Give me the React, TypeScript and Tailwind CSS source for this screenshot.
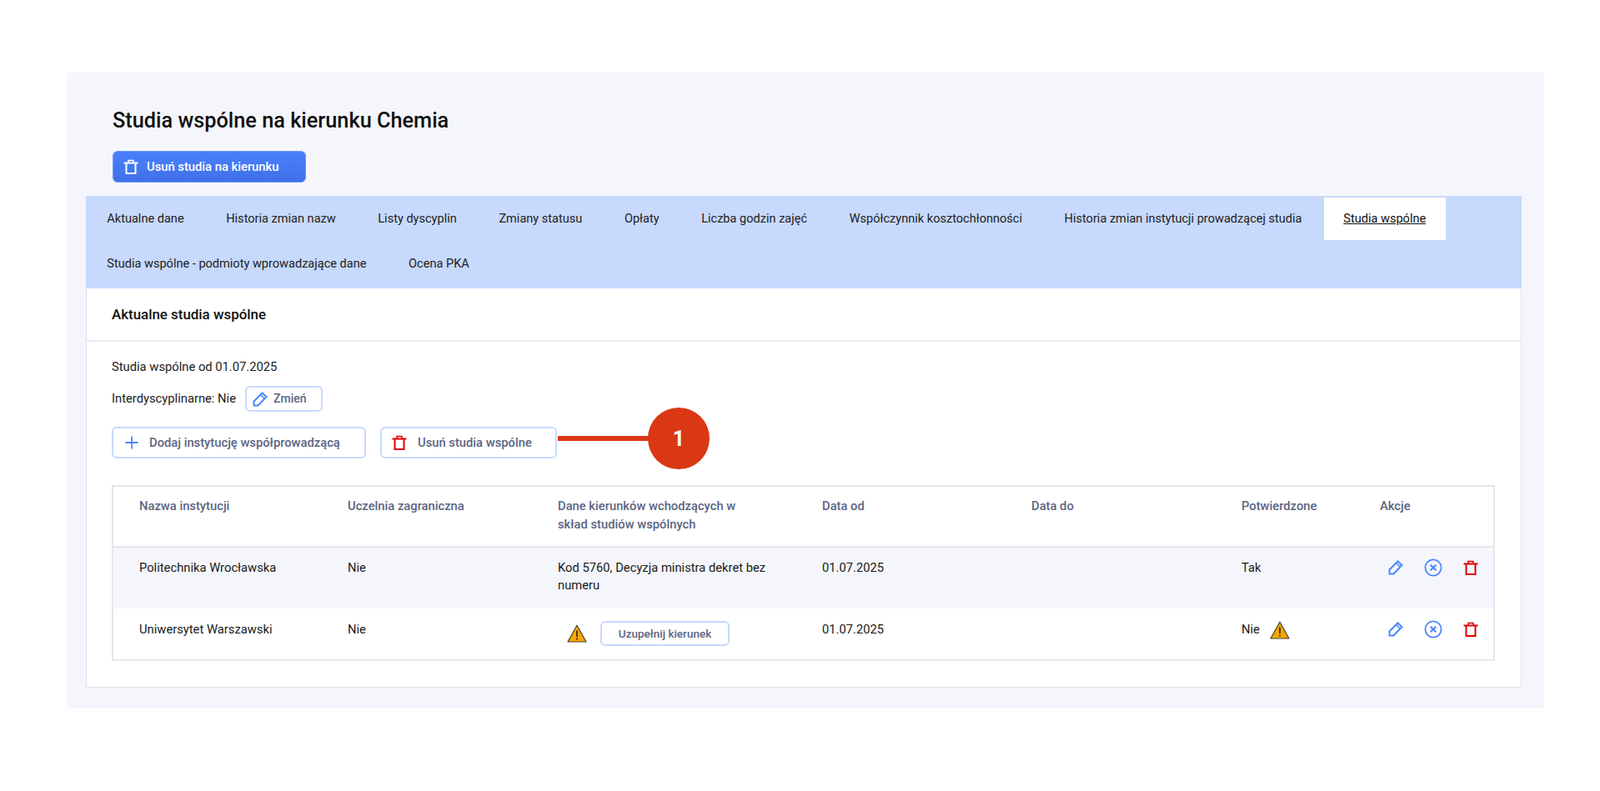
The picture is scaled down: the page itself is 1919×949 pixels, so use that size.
import React from "react";

const Trash = ({ c = "text-[#e00000]", s = "w-[18px] h-[18px]" }: { c?: string; s?: string }) => (
  <svg viewBox="0 0 18 18" className={`${c} ${s} shrink-0`} fill="none" stroke="currentColor" strokeWidth="2">
    <path d="M0.5 4.5H17.5" />
    <path d="M6 4V1.5H12V4" strokeWidth="1.5" />
    <path d="M3.5 4.5V17H14.5V4.5" />
  </svg>
);

const Pencil = () => (
  <svg viewBox="0 0 18 18" className="w-[18px] h-[18px] shrink-0 text-[#4d87ff]" fill="none" stroke="currentColor" strokeWidth="2" strokeLinejoin="miter">
    <path d="M1.5 16.5V11.5L11.5 1.5L16.5 6L6.5 16.5Z" />
    <path d="M9.5 3.5L14.5 8.5" strokeWidth="1.6" />
  </svg>
);

const CircleX = () => (
  <svg viewBox="0 0 22 22" className="w-[22px] h-[22px] shrink-0 text-[#4d87ff]" fill="none" stroke="currentColor">
    <circle cx="11" cy="11" r="9.6" strokeWidth="1.8" />
    <path d="M7.7 7.7L14.3 14.3M14.3 7.7L7.7 14.3" strokeWidth="2.2" />
  </svg>
);

const Warn = () => (
  <svg viewBox="0 0 24 22" className="w-[24px] h-[22px] shrink-0">
    <path d="M12 1.2L23 21H1Z" fill="#f5a800" stroke="#4a4336" strokeWidth="1.2" strokeLinejoin="round" />
    <rect x="11" y="7.5" width="2" height="7.5" fill="#4a3a10" />
    <rect x="11" y="16.5" width="2" height="2" fill="#4a3a10" />
  </svg>
);

const Plus = () => (
  <svg viewBox="0 0 16 16" className="w-[16px] h-[16px] shrink-0 text-[#4d87ff]" fill="none" stroke="currentColor" strokeWidth="1.8">
    <path d="M8 0.5V15.5M0.5 8H15.5" />
  </svg>
);

const Outline = ({ className = "", children }: { className?: string; children: React.ReactNode }) => (
  <button className={`flex items-center border-2 border-[#c7d9fd] rounded-[6px] bg-white font-medium text-[#5c6583] ${className}`}>
    {children}
  </button>
);

const tabs = [
  "Aktualne dane",
  "Historia zmian nazw",
  "Listy dyscyplin",
  "Zmiany statusu",
  "Opłaty",
  "Liczba godzin zajęć",
  "Współczynnik kosztochłonności",
  "Historia zmian instytucji prowadzącej studia",
  "Studia wspólne",
  "Studia wspólne - podmioty wprowadzające dane",
  "Ocena PKA",
];

const Actions = () => (
  <div className="flex items-center h-[21px]">
    <Pencil />
    <span className="ml-[25px]"><CircleX /></span>
    <span className="ml-[25px]"><Trash /></span>
  </div>
);

export default function App() {
  return (
    <div className="relative w-[1919px] h-[949px] bg-white overflow-hidden pt-[87px] pl-[81px] text-[14.75px] leading-[21px] text-[#1a1a1a] font-[Roboto]">
      <div className="w-[1771px] h-[763px] bg-[#f4f6fb] pl-[22px]">
        <div className="w-[1722px]">
          <div className="pl-[32px] pt-[43px]">
            <h1 className="text-[25.3px] leading-[30px] font-medium text-[#111111]">Studia wspólne na kierunku Chemia</h1>
            <button className="mt-[21px] flex items-center w-[232px] h-[38px] pl-[12px] rounded-[6px] border border-[#6c98fb] bg-gradient-to-b from-[#4a80fd] to-[#3f70e8] text-white text-[14.75px] font-medium">
              <Trash c="text-white" />
              <span className="ml-[10px]">Usuń studia na kierunku</span>
            </button>
          </div>

          <div className="mt-[16px] bg-[#c7d9fd] flex flex-wrap pt-[2px] pb-[1px] text-[14.55px]">
            {tabs.map((t) =>
              t === "Studia wspólne" ? (
                <a key={t} className="mx-[1px] mb-[3px] h-[51px] px-[23.5px] bg-white flex items-center underline text-[#111111]">{t}</a>
              ) : (
                <a key={t} className="mx-[1px] mb-[3px] h-[51px] px-[24.3px] flex items-center text-[#222222]">{t}</a>
              )
            )}
          </div>

          <div className="bg-white border border-t-0 border-[#e0e2e8] h-[479px]">
            <div className="h-[64px] border-b-2 border-[#e8e9ee] pl-[30px] flex items-center">
              <h2 className="text-[16.9px] font-medium text-[#111111]">Aktualne studia wspólne</h2>
            </div>
            <div className="pl-[30px] pt-[20px]">
              <p className="h-[21px]">Studia wspólne od 01.07.2025</p>
              <div className="flex items-center mt-[12px] h-[31px]">
                <span>Interdyscyplinarne: Nie</span>
                <Outline className="ml-[11px] w-[93px] h-[31px] pl-[7px]">
                  <Pencil />
                  <span className="ml-[7px] text-[14px]">Zmień</span>
                </Outline>
              </div>
              <div className="flex items-center mt-[18px] gap-[17px]">
                <Outline className="w-[305px] h-[38px] pl-[14px]">
                  <Plus />
                  <span className="ml-[13px]">Dodaj instytucję współprowadzącą</span>
                </Outline>
                <Outline className="w-[212px] h-[38px] pl-[12px]">
                  <Trash />
                  <span className="ml-[13px]">Usuń studia wspólne</span>
                </Outline>
              </div>

              <div className="mt-[32px] w-[1659px] h-[211px] border-2 border-[#e5e7eb]">
                <table className="w-full table-fixed border-collapse">
                  <colgroup>
                    <col className="w-[281px]" />
                    <col className="w-[252px]" />
                    <col className="w-[317px]" />
                    <col className="w-[251px]" />
                    <col className="w-[252px]" />
                    <col className="w-[165px]" />
                    <col />
                  </colgroup>
                  <thead>
                    <tr className="h-[72px] border-b-2 border-[#e5e7eb] text-left align-top text-[#5c6583] font-medium leading-[22px]">
                      <th className="pl-[31px] pt-[12px] font-medium">Nazwa instytucji</th>
                      <th className="pt-[12px] font-medium">Uczelnia zagraniczna</th>
                      <th className="pt-[12px] pr-[65px] font-medium">Dane kierunków wchodzących w skład studiów wspólnych</th>
                      <th className="pt-[12px] font-medium">Data od</th>
                      <th className="pt-[12px] font-medium">Data do</th>
                      <th className="pt-[12px] font-medium">Potwierdzone</th>
                      <th className="pt-[12px] pl-[1px] font-medium">Akcje</th>
                    </tr>
                  </thead>
                  <tbody>
                    <tr className="h-[74px] bg-[#f4f6fb] align-top">
                      <td className="pl-[31px] pt-[14px]">Politechnika Wrocławska</td>
                      <td className="pt-[14px]">Nie</td>
                      <td className="pt-[14px] pr-[65px]">Kod 5760, Decyzja ministra dekret bez numeru</td>
                      <td className="pt-[14px]">01.07.2025</td>
                      <td className="pt-[14px]"></td>
                      <td className="pt-[14px]">Tak</td>
                      <td className="pt-[13px] pl-[11px]"><Actions /></td>
                    </tr>
                    <tr className="h-[61px] align-top">
                      <td className="pl-[31px] pt-[15px]">Uniwersytet Warszawski</td>
                      <td className="pt-[15px]">Nie</td>
                      <td className="pt-[15px]">
                        <div className="flex items-center pl-[11px]">
                          <Warn />
                          <Outline className="ml-[16px] w-[155px] h-[30px] justify-center text-[13.5px]">Uzupełnij kierunek</Outline>
                        </div>
                      </td>
                      <td className="pt-[15px]">01.07.2025</td>
                      <td className="pt-[15px]"></td>
                      <td className="pt-[15px]">
                        <div className="flex items-start">
                          <span>Nie</span>
                          <span className="ml-[12px]"><Warn /></span>
                        </div>
                      </td>
                      <td className="pt-[14px] pl-[11px]"><Actions /></td>
                    </tr>
                  </tbody>
                </table>
              </div>
            </div>
          </div>
        </div>
      </div>

      <div className="absolute left-[669px] top-[523px] w-[114px] h-[6px] bg-[#da3714]" />
      <div className="absolute left-[777px] top-[489px] w-[74px] h-[74px] rounded-full bg-[#da3714] flex items-center justify-center text-white text-[25px] font-bold font-['Open_Sans']">
        1
      </div>
    </div>
  );
}
